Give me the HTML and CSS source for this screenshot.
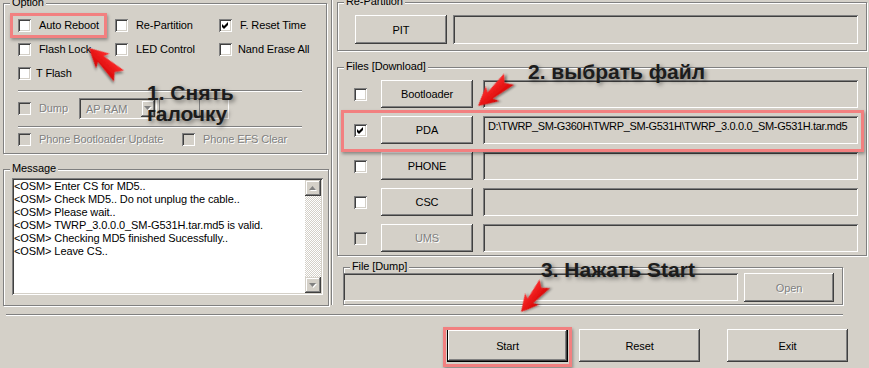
FILE: index.html
```html
<!DOCTYPE html>
<html lang="ru">
<head>
    <meta charset="UTF-8">
    <meta name="viewport" content="width=device-width, initial-scale=1.0">
    <title>Odin3</title>
    <link rel="stylesheet" href="styles.css">
</head>
<body>
<div class="window">
    <div class="panes">
        <div class="left">
            <div class="group option-group">
                <span class="caption">Option</span>
                <div class="option-grid">
                    <label class="check"><span class="box"></span>Auto Reboot</label>
                    <label class="check"><span class="box"></span>Re-Partition</label>
                    <label class="check"><span class="box"><svg width="13" height="13" viewBox="0 0 13 13"><path d="M3 5v3l2 2 4-4V3L5 7z"/></svg></span>F. Reset Time</label>
                    <label class="check"><span class="box"></span>Flash Lock</label>
                    <label class="check"><span class="box"></span>LED Control</label>
                    <label class="check tight"><span class="box"></span>Nand Erase All</label>
                    <label class="check tighter"><span class="box"></span>T Flash</label>
                </div>
                <div class="etched-line"></div>
                <div class="dump-row">
                    <label class="check disabled"><span class="box"></span>Dump</label>
                    <div class="combo">
                        <span class="combo-text">AP RAM</span>
                        <span class="combo-drop"><svg width="8" height="5" viewBox="0 0 8 5"><polygon class="hl" points="1,1 8,1 4.5,5"/><polygon class="sh" points="0,0 7,0 3.5,4"/></svg></span>
                    </div>
                    <div class="size-box"><span class="size-split"></span></div>
                </div>
                <div class="etched-line second"></div>
                <div class="phone-row">
                    <label class="check disabled"><span class="box"></span>Phone Bootloader Update</label>
                    <label class="check disabled"><span class="box"></span>Phone EFS Clear</label>
                </div>
            </div>

            <div class="group message-group">
                <span class="caption">Message</span>
                <div class="log">
                    <div class="log-lines">
                        <div>&lt;OSM&gt; Enter CS for MD5..</div>
                        <div>&lt;OSM&gt; Check MD5.. Do not unplug the cable..</div>
                        <div>&lt;OSM&gt; Please wait..</div>
                        <div>&lt;OSM&gt; TWRP_3.0.0.0_SM-G531H.tar.md5 is valid.</div>
                        <div>&lt;OSM&gt; Checking MD5 finished Sucessfully..</div>
                        <div>&lt;OSM&gt; Leave CS..</div>
                    </div>
                    <div class="scrollbar">
                        <span class="sb-btn"><svg width="8" height="5" viewBox="0 0 8 5"><polygon class="hl" points="4.5,1 8,5 1,5"/><polygon class="sh" points="3.5,0 7,4 0,4"/></svg></span>
                        <span class="sb-track"></span>
                        <span class="sb-btn"><svg width="8" height="5" viewBox="0 0 8 5"><polygon class="hl" points="1,1 8,1 4.5,5"/><polygon class="sh" points="0,0 7,0 3.5,4"/></svg></span>
                    </div>
                </div>
            </div>
        </div>

        <div class="right">
            <div class="group repartition-group">
                <span class="caption">Re-Partition</span>
                <div class="pit-row">
                    <button class="btn pit-btn">PIT</button>
                    <div class="field pit-field"></div>
                </div>
            </div>

            <div class="group files-group">
                <span class="caption">Files [Download]</span>
                <div class="file-slot">
                    <span class="box"></span>
                    <button class="btn">Bootloader</button>
                    <div class="field"></div>
                </div>
                <div class="file-slot">
                    <span class="box"><svg width="13" height="13" viewBox="0 0 13 13"><path d="M3 5v3l2 2 4-4V3L5 7z"/></svg></span>
                    <button class="btn">PDA</button>
                    <div class="field path">D:\TWRP_SM-G360H\TWRP_SM-G531H\TWRP_3.0.0.0_SM-G531H.tar.md5</div>
                </div>
                <div class="file-slot">
                    <span class="box"></span>
                    <button class="btn">PHONE</button>
                    <div class="field"></div>
                </div>
                <div class="file-slot">
                    <span class="box"></span>
                    <button class="btn">CSC</button>
                    <div class="field"></div>
                </div>
                <div class="file-slot">
                    <span class="box off"></span>
                    <button class="btn" disabled>UMS</button>
                    <div class="field"></div>
                </div>
            </div>

            <div class="group dump-group">
                <span class="caption">File [Dump]</span>
                <div class="field dump-field"></div>
                <button class="btn open-btn" disabled>Open</button>
            </div>
        </div>
    </div>

    <div class="separator"></div>

    <div class="actions">
        <button class="btn default start-btn">Start</button>
        <button class="btn reset-btn">Reset</button>
        <button class="btn">Exit</button>
    </div>

    <!-- red marks drawn over the screenshot -->
    <div class="annotations">
        <div class="mark mark-reboot"></div>
        <div class="mark mark-pda"></div>
        <div class="mark mark-start"></div>
        <div class="note note-1">1. Снять<br>галочку</div>
        <div class="note note-2">2. выбрать файл</div>
        <div class="note note-3">3. Нажать Start</div>
        <svg class="arrows" width="869" height="368" viewBox="0 0 869 368">
            <defs>
                <linearGradient id="red" x1="0" y1="0" x2="0" y2="1">
                    <stop offset="0" stop-color="#ff3030"/>
                    <stop offset="1" stop-color="#d40000"/>
                </linearGradient>
                <filter id="shade" x="-50%" y="-50%" width="200%" height="200%">
                    <feDropShadow dx="1.5" dy="2" stdDeviation="1.2" flood-color="#000" flood-opacity="0.45"/>
                </filter>
                <polygon id="dart" points="0,0 19,-10 16,-4 41,-7.5 35,0 41,7.5 16,4 19,10"/>
            </defs>
            <use href="#dart" fill="url(#red)" filter="url(#shade)" transform="translate(89 48) rotate(43)"/>
            <use href="#dart" fill="url(#red)" filter="url(#shade)" transform="translate(478 106) rotate(-41)"/>
            <use href="#dart" fill="url(#red)" filter="url(#shade)" transform="translate(521 312) rotate(-50) scale(0.9)"/>
        </svg>
    </div>
</div>
</body>
</html>
```

FILE: styles.css
```css
* {
    box-sizing: border-box;
}
body {
    margin: 0;
    background-color: #d4d0c8;
    font-family: "Liberation Sans", Arial, sans-serif;
    font-size: 11px;
    letter-spacing: -0.1px;
    color: #000;
}
.window {
    position: relative;
    width: 869px;
    height: 368px;
    overflow: hidden;
}
.panes {
    display: flex;
    height: 306px;
}
.left {
    flex: none;
    width: 332px;
    height: 305px;
    padding: 3px 0 0 3px;
    border-right: 1px solid #808080;
    box-shadow: 1px 0 0 #fff;
}
.right {
    flex: 1;
    padding: 2px 0 0 5px;
}

/* etched group box */
.group {
    position: relative;
    border: 1px solid #808080;
    box-shadow: inset 1px 1px 0 #fff, 1px 1px 0 #fff;
}
.caption {
    position: absolute;
    top: -8px;
    left: 6px;
    padding: 0 2px;
    line-height: 13px;
    background-color: #d4d0c8;
    white-space: nowrap;
}
.etched-line {
    width: 284px;
    height: 2px;
    margin-top: 5px;
    border-top: 1px solid #808080;
    border-bottom: 1px solid #fff;
}
.etched-line.second {
    margin-top: 7px;
}

/* 3d controls */
.btn {
    font: inherit;
    letter-spacing: inherit;
    color: #000;
    background-color: #d4d0c8;
    border: 0;
    padding: 0;
    box-shadow: inset -1px -1px 0 #404040, inset 1px 1px 0 #fff, inset -2px -2px 0 #808080, inset 2px 2px 0 #d4d0c8;
}
.btn:disabled {
    color: #808080;
    text-shadow: 1px 1px 0 #fff;
}
.btn.default {
    border: 1px solid #000;
}
.field {
    background-color: #d4d0c8;
    box-shadow: inset 1px 1px 0 #808080, inset -1px -1px 0 #fff, inset 2px 2px 0 #404040, inset -2px -2px 0 #d4d0c8;
}
.field.path {
    padding: 4px 0 0 5px;
    line-height: 13px;
    letter-spacing: -0.35px;
    white-space: nowrap;
    overflow: hidden;
}
.box {
    flex: none;
    display: flex;
    width: 13px;
    height: 13px;
    background-color: #fff;
    box-shadow: inset 1px 1px 0 #808080, inset -1px -1px 0 #fff, inset 2px 2px 0 #404040, inset -2px -2px 0 #d4d0c8;
}
.box.off,
.check.disabled .box {
    background-color: #d4d0c8;
}
.check {
    display: flex;
    align-items: center;
    gap: 8px;
    line-height: 13px;
    white-space: nowrap;
}
.check.tight {
    gap: 6px;
}
.check.tighter {
    gap: 5px;
}
.check.disabled {
    color: #808080;
    text-shadow: 1px 1px 0 #fff;
}
.hl {
    fill: #fff;
}
.sh {
    fill: #808080;
}

/* option block */
.option-group {
    width: 324px;
    height: 151px;
    padding: 9px 0 0 14px;
}
.option-grid {
    display: grid;
    grid-template-columns: 97px 104px auto;
    grid-auto-rows: 24px;
    align-items: center;
}
.dump-row {
    display: flex;
    align-items: center;
    height: 21px;
    margin-top: 6px;
}
.dump-row .check {
    width: 61px;
}
.combo {
    display: flex;
    align-items: center;
    width: 78px;
    height: 21px;
    padding: 2px;
    background-color: #d4d0c8;
    box-shadow: inset 1px 1px 0 #808080, inset -1px -1px 0 #fff, inset 2px 2px 0 #404040, inset -2px -2px 0 #d4d0c8;
}
.combo-text {
    padding-left: 5px;
    color: #808080;
    text-shadow: 1px 1px 0 #fff;
}
.combo-drop {
    display: flex;
    align-items: center;
    justify-content: center;
    width: 14px;
    height: 17px;
    margin-left: auto;
    box-shadow: inset -1px -1px 0 #404040, inset 1px 1px 0 #d4d0c8, inset -2px -2px 0 #808080, inset 2px 2px 0 #fff;
}
.size-box {
    display: flex;
    width: 70px;
    height: 21px;
    margin-left: 2px;
    border-top: 1px solid #808080;
    border-left: 1px solid #808080;
    border-right: 1px solid #fff;
    border-bottom: 1px solid #fff;
}
.size-split {
    width: 40px;
    border-right: 1px solid #808080;
}
.phone-row {
    display: flex;
    align-items: center;
    height: 23px;
}
.phone-row .check:first-child {
    width: 164px;
}

/* message log */
.message-group {
    width: 326px;
    height: 137px;
    margin-top: 15px;
    padding: 8px 0 0 8px;
}
.log {
    display: flex;
    width: 311px;
    height: 117px;
    padding: 2px;
    background-color: #fff;
    box-shadow: inset 1px 1px 0 #808080, inset -1px -1px 0 #fff, inset 2px 2px 0 #404040, inset -2px -2px 0 #d4d0c8;
}
.log-lines {
    flex: 1;
    line-height: 13px;
    white-space: nowrap;
    overflow: hidden;
}
.scrollbar {
    display: flex;
    flex-direction: column;
    width: 16px;
}
.sb-btn {
    display: flex;
    align-items: center;
    justify-content: center;
    height: 16px;
    background-color: #d4d0c8;
    box-shadow: inset -1px -1px 0 #404040, inset 1px 1px 0 #d4d0c8, inset -2px -2px 0 #808080, inset 2px 2px 0 #fff;
}
.sb-track {
    flex: 1;
    background-image: conic-gradient(#fff 25%, #d4d0c8 0 50%, #fff 0 75%, #d4d0c8 0);
    background-size: 2px 2px;
}

/* right side */
.repartition-group {
    width: 530px;
    height: 49px;
    padding: 12px 0 0 17px;
}
.pit-row {
    display: flex;
    gap: 6px;
}
.pit-btn {
    width: 92px;
    height: 29px;
}
.pit-field {
    width: 405px;
    height: 29px;
}
.files-group {
    display: flex;
    flex-direction: column;
    gap: 8px;
    width: 530px;
    height: 189px;
    margin-top: 16px;
    padding: 12px 0 0 16px;
}
.file-slot {
    display: flex;
    align-items: center;
    height: 28px;
}
.file-slot .btn {
    width: 92px;
    height: 28px;
    margin-left: 14px;
}
.file-slot .field {
    width: 375px;
    height: 28px;
    margin-left: 10px;
}
.dump-group {
    display: flex;
    align-items: flex-start;
    gap: 6px;
    width: 500px;
    height: 38px;
    margin: 11px 0 0 6px;
    padding-top: 5px;
}
.dump-field {
    width: 395px;
    height: 28px;
    margin-left: -1px;
}
.open-btn {
    width: 90px;
    height: 29px;
}

/* bottom bar */
.separator {
    width: 837px;
    height: 2px;
    margin: 8px 0 0 6px;
    border-top: 1px solid #808080;
    border-bottom: 1px solid #fff;
}
.actions {
    display: flex;
    margin-top: 13px;
    padding-left: 447px;
}
.actions .btn {
    width: 121px;
    height: 33px;
}
.start-btn {
    margin-right: 11px;
}
.reset-btn {
    margin-right: 27px;
}

/* annotations */
.annotations {
    position: absolute;
    top: 0;
    left: 0;
    width: 869px;
    height: 368px;
    pointer-events: none;
}
.mark {
    position: absolute;
    border: 3px solid #f28080;
    box-shadow: 1px 2px 3px rgba(0, 0, 0, 0.35);
}
.mark-reboot {
    left: 10px;
    top: 13px;
    width: 97px;
    height: 25px;
}
.mark-pda {
    left: 341px;
    top: 110px;
    width: 523px;
    height: 42px;
}
.mark-start {
    left: 443px;
    top: 327px;
    width: 129px;
    height: 40px;
}
.note {
    position: absolute;
    font-weight: bold;
    font-size: 21px;
    line-height: 21px;
    letter-spacing: 0;
    color: #1c1c1c;
    text-shadow: 2px 2px 4px rgba(0, 0, 0, 0.5);
    white-space: nowrap;
}
.note-1 {
    left: 147px;
    top: 82px;
}
.note-2 {
    left: 528px;
    top: 61px;
}
.note-3 {
    left: 541px;
    top: 259px;
}
.arrows {
    position: absolute;
    top: 0;
    left: 0;
}
```
